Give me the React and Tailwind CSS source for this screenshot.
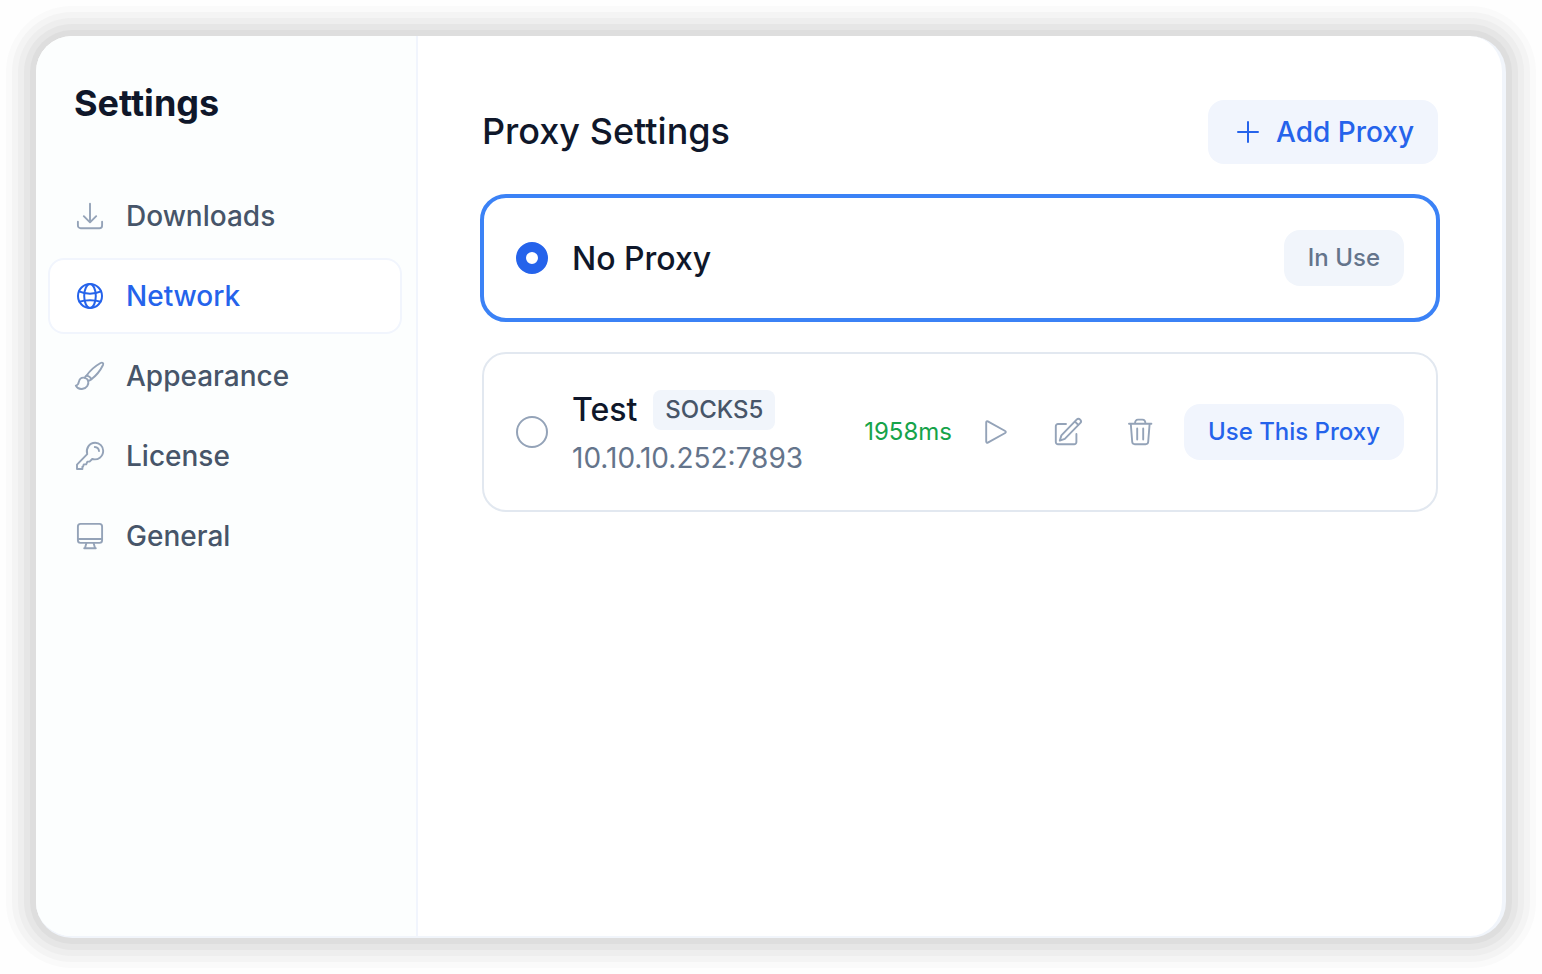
import { useState } from "react";

const Icon = ({ children, width = 1.9 }) => (
  <svg
    className="size-8 shrink-0"
    viewBox="0 0 32 32"
    fill="none"
    stroke="currentColor"
    strokeWidth={width}
    strokeLinecap="round"
    strokeLinejoin="round"
    aria-hidden="true"
  >
    {children}
  </svg>
);

const DownloadIcon = () => (
  <Icon>
    <path d="M16 3.8v18.4M9.8 16.2l6.200 6.200 6.200-6.200" />
    <path d="M3.900 21.800v3.600a2.800 2.800 0 0 0 2.800 2.800h18.600a2.800 2.800 0 0 0 2.800-2.800v-3.600" />
  </Icon>
);

const GlobeIcon = () => (
  <Icon width={2}>
    <circle cx="16" cy="16" r="12" />
    <ellipse cx="16" cy="16" rx="5.8" ry="12" />
    <path d="M5 11.4c6.400 3 15.600 3 22 0M5.400 21.800c6-2 15.200-2 21.200 0" />
  </Icon>
);

const BrushIcon = () => (
  <Icon>
    <path d="M12.600 15.600C15.400 11.400 20.200 6.600 26.600 3c1.800-1 3.200.2 2.400 2-2.800 5.800-7 10.800-11.600 14.200" />
    <path d="M12.600 15.600c2.200.4 4 1.800 4.800 3.600-1 .8-2 1.400-3.200 1.600-.6-1.600-1.800-2.600-3.400-3 .4-.8 1-1.600 1.800-2.200z" />
    <path d="M10.800 17.800c-3-.6-5.200 1-5.800 3.600-.4 2-.8 4-3.200 4.200 1.400 2.600 4 3.800 7 3.200 4-.8 6.200-4.200 5.400-8" />
  </Icon>
);

const KeyIcon = () => (
  <Icon>
    <path d="M3 29v-4.400L13.200 14.200c-1.600-5.600 2-11.400 8-11.400 4.400 0 8 3.600 8 8 0 5.800-5.200 9.800-11 8.200l-2.600 2.600h-2.200l-1.200 2.800h-2.400l-.8 2.400H8.400V29z" />
    <path d="M20.800 7c2.400.2 4 1.800 4.200 4" />
  </Icon>
);

const MonitorIcon = () => (
  <Icon>
    <rect x="3.900" y="3.900" width="24.200" height="19" rx="2.600" />
    <path d="M3.900 19h24.200M12.400 23l-1.400 5M19.600 23l1.400 5M10.200 28.200h11.600" />
  </Icon>
);

const PlusIcon = () => (
  <Icon width={2}>
    <path d="M16 6v20M6 16h20" />
  </Icon>
);

const PlayIcon = () => (
  <Icon>
    <path d="M6.200 6.400v19.200c0 .9.900 1.400 1.600 1l17.400-9.600c.8-.4.800-1.600 0-2L7.800 5.400c-.7-.4-1.600.1-1.600 1z" />
  </Icon>
);

const EditIcon = () => (
  <Icon>
    <path d="M14 8H6a2.200 2.200 0 0 0-2.200 2.200V26A2.200 2.200 0 0 0 6 28.200h16.200a2.200 2.200 0 0 0 2.200-2.200v-8" />
    <path d="M24.600 3.600a2.500 2.500 0 0 1 3.600 3.600L12.800 22.800 7.800 24.600l1.600-5.200zM23 5.600l3.400 3.400" />
  </Icon>
);

const TrashIcon = () => (
  <Icon>
    <path d="M5 7.800h22.400M11 7.600c0-2.400 1-4 3-4h4.400c2 0 3 1.600 3 4" />
    <path d="M6.800 8l1.400 17.800c.1 1.400 1.200 2.400 2.600 2.400h10.800c1.400 0 2.500-1 2.600-2.400L25.600 8M13.200 12.400v11.200M19.200 12.400v11.200" />
  </Icon>
);

const navItems = [
  { label: "Downloads", icon: DownloadIcon },
  { label: "Network", icon: GlobeIcon },
  { label: "Appearance", icon: BrushIcon },
  { label: "License", icon: KeyIcon },
  { label: "General", icon: MonitorIcon },
];

const proxies = [
  {
    id: "test",
    name: "Test",
    type: "SOCKS5",
    address: "10.10.10.252:7893",
    latency: 1958,
  },
];

const radioClass =
  "size-8 shrink-0 appearance-none rounded-full border-2 border-[#94a3b8] bg-white checked:border-[10px] checked:border-[#2563eb]";

const cardClass = (isSelected) =>
  isSelected
    ? "-m-0.5 rounded-[26px] border-4 border-[#3b82f6]"
    : "rounded-3xl border-2 border-slate-200";

const IconButton = ({ label, children }) => (
  <button
    type="button"
    aria-label={label}
    className="rounded-xl p-3 text-[#94a3b8] hover:text-slate-600"
  >
    {children}
  </button>
);

const Sidebar = ({ active, setActive }) => (
  <aside className="w-[382px] shrink-0 border-r-2 border-[#f1f5fd] bg-[#fcfefe]">
    <h1 className="px-[38px] pt-11 text-4xl leading-[46px] font-bold text-[#0f172a]">
      Settings
    </h1>
    <nav className="mt-13 flex flex-col gap-1 pr-[14px] pl-3">
      {navItems.map(({ label, icon: ItemIcon }) => {
        const isActive = label === active;
        return (
          <button
            key={label}
            type="button"
            onClick={() => setActive(label)}
            className={`flex h-[76px] items-center gap-5 rounded-2xl border-2 px-6 text-[28px] font-medium ${
              isActive
                ? "border-[#f1f5fd] bg-white text-[#2563eb]"
                : "border-transparent text-[#475569]"
            }`}
          >
            <span className={isActive ? "text-[#2563eb]" : "text-[#94a3b8]"}>
              <ItemIcon />
            </span>
            {label}
          </button>
        );
      })}
    </nav>
  </aside>
);

const App = () => {
  const [active, setActive] = useState("Network");
  const [selected, setSelected] = useState("none");

  return (
    <div className="flex min-h-screen bg-[#fefefe] p-9 font-['Inter',sans-serif]">
      <div className="flex grow overflow-hidden rounded-[36px] border-r-4 border-b-2 border-[#f1f5fb] bg-white shadow-[0_0_0_6px_#dedede,0_0_0_12px_#e6e6e6,0_0_0_18px_#eeeeee,0_0_0_24px_#f4f4f4,0_0_0_30px_#fafafa]">
        <Sidebar active={active} setActive={setActive} />

        <main className="grow px-16 py-16">
          <div className="flex items-center justify-between">
            <h2 className="pb-0.5 text-4xl font-medium text-[#0f172a]">
              Proxy Settings
            </h2>
            <button
              type="button"
              className="flex h-16 items-center gap-3 rounded-2xl bg-[#f1f5fd] px-6 text-[28px] font-medium text-[#2563eb]"
            >
              <PlusIcon />
              Add Proxy
            </button>
          </div>

          <div className="mt-8 flex flex-col gap-8">
            <div
              className={`flex items-center gap-6 px-8 py-8 ${cardClass(selected === "none")}`}
            >
              <input
                id="proxy-none"
                type="radio"
                name="proxy"
                className={radioClass}
                checked={selected === "none"}
                onChange={() => setSelected("none")}
              />
              <label
                htmlFor="proxy-none"
                className="grow pt-0.5 text-[32px] leading-[48px] font-medium text-[#0f172a]"
              >
                No Proxy
              </label>
              {selected === "none" && (
                <span className="flex h-14 items-center rounded-2xl bg-[#f1f5fb] px-6 text-2xl font-medium text-[#64748b]">
                  In Use
                </span>
              )}
            </div>

            {proxies.map((proxy) => (
              <div
                key={proxy.id}
                className={`flex h-40 items-center gap-6 px-8 ${cardClass(selected === proxy.id)}`}
              >
                <input
                  id={`proxy-${proxy.id}`}
                  type="radio"
                  name="proxy"
                  className={radioClass}
                  checked={selected === proxy.id}
                  onChange={() => setSelected(proxy.id)}
                />
                <div className="grow pt-1">
                  <div className="flex items-center gap-4">
                    <label
                      htmlFor={`proxy-${proxy.id}`}
                      className="text-[32px] leading-[48px] font-medium text-[#0f172a]"
                    >
                      {proxy.name}
                    </label>
                    <span className="flex h-10 items-center rounded-lg bg-[#f1f5fb] px-3 text-2xl font-medium text-[#475569]">
                      {proxy.type}
                    </span>
                  </div>
                  <p className="text-[28px] leading-[48px] text-[#64748b]">
                    {proxy.address}
                  </p>
                </div>
                <div className="flex items-center gap-4">
                  <span className="text-2xl text-[#16a34a]">
                    {proxy.latency}ms
                  </span>
                  <IconButton label="Test proxy">
                    <PlayIcon />
                  </IconButton>
                  <IconButton label="Edit proxy">
                    <EditIcon />
                  </IconButton>
                  <IconButton label="Delete proxy">
                    <TrashIcon />
                  </IconButton>
                  <button
                    type="button"
                    onClick={() => setSelected(proxy.id)}
                    className="h-14 rounded-2xl bg-[#f1f5fd] px-6 text-2xl font-medium text-[#2563eb]"
                  >
                    Use This Proxy
                  </button>
                </div>
              </div>
            ))}
          </div>
        </main>
      </div>
    </div>
  );
};

export default App;
